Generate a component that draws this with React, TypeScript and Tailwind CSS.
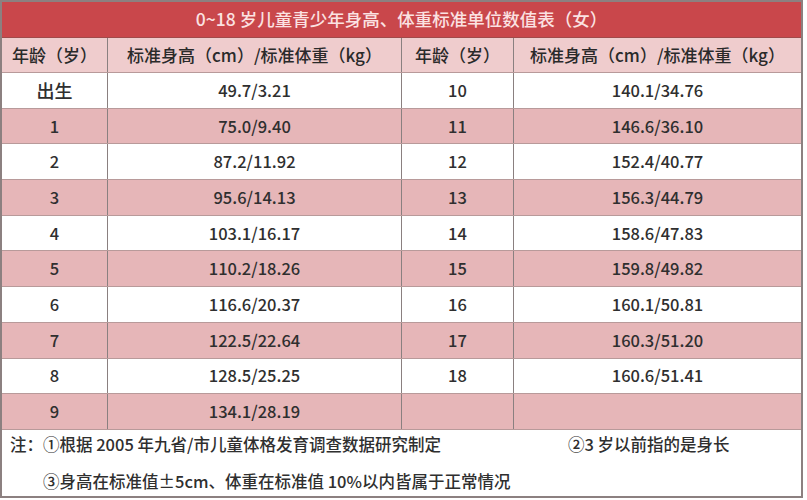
import React from "react";

const left = [
  ["出生", "49.7/3.21"],
  ["1", "75.0/9.40"],
  ["2", "87.2/11.92"],
  ["3", "95.6/14.13"],
  ["4", "103.1/16.17"],
  ["5", "110.2/18.26"],
  ["6", "116.6/20.37"],
  ["7", "122.5/22.64"],
  ["8", "128.5/25.25"],
  ["9", "134.1/28.19"],
];
const right = [
  ["10", "140.1/34.76"],
  ["11", "146.6/36.10"],
  ["12", "152.4/40.77"],
  ["13", "156.3/44.79"],
  ["14", "158.6/47.83"],
  ["15", "159.8/49.82"],
  ["16", "160.1/50.81"],
  ["17", "160.3/51.20"],
  ["18", "160.6/51.41"],
  ["", ""],
];

const font = { fontFamily: '"Noto Sans CJK SC", "Noto Sans", sans-serif' };

export default function App() {
  return (
    <div className="w-[807px] h-[500px] bg-white overflow-hidden" style={font}>
      <div className="w-[803px] h-[498px] border-2 border-[#8c8080] flex flex-col bg-white font-medium">
        <div className="h-[36px] bg-[#c9474b] flex items-center justify-center text-[17.5px] text-[#fbe2e2] border-b border-[#a04a4a]">
          0~18 岁儿童青少年身高、体重标准单位数值表（女）
        </div>
        <div className="grid grid-cols-[106px_294px_112px_1fr] h-[35px] bg-[#efcccd] text-[17px] text-[#2a2a2a] border-b border-[#b89a9a]">
          <div className="flex items-center justify-center border-r border-[#8a8080]">年龄（岁）</div>
          <div className="flex items-center justify-center border-r border-[#8a8080]">标准身高（cm）/标准体重（kg）</div>
          <div className="flex items-center justify-center border-r border-[#8a8080]">年龄（岁）</div>
          <div className="flex items-center justify-center">标准身高（cm）/标准体重（kg）</div>
        </div>
        {left.map((l, i) => {
          const r = right[i];
          const pink = i % 2 === 1;
          return (
            <div
              key={i}
              className={`grid grid-cols-[106px_294px_112px_1fr] h-[35.7px] text-[16.5px] text-[#2f2f2f] border-b border-[#b89a9a] ${pink ? "bg-[#e6b6b8]" : "bg-white"}`}
            >
              <div className={`flex items-center justify-center border-r border-[#8a8080] ${i === 0 ? "text-[18px]" : ""}`}>{l[0]}</div>
              <div className="flex items-center justify-center border-r border-[#8a8080]">{l[1]}</div>
              <div className="flex items-center justify-center border-r border-[#8a8080]">{r[0]}</div>
              <div className="flex items-center justify-center">{r[1]}</div>
            </div>
          );
        })}
        <div className="flex-1 flex flex-col justify-center gap-[12px] text-[16.5px] text-[#2f2f2f] pl-[8px]">
          <div className="flex">
            <span className="w-[558px]">注：①根据 2005 年九省/市儿童体格发育调查数据研究制定</span>
            <span>②3 岁以前指的是身长</span>
          </div>
          <div className="pl-[33px]">③身高在标准值±5cm、体重在标准值 10%以内皆属于正常情况</div>
        </div>
      </div>
    </div>
  );
}
